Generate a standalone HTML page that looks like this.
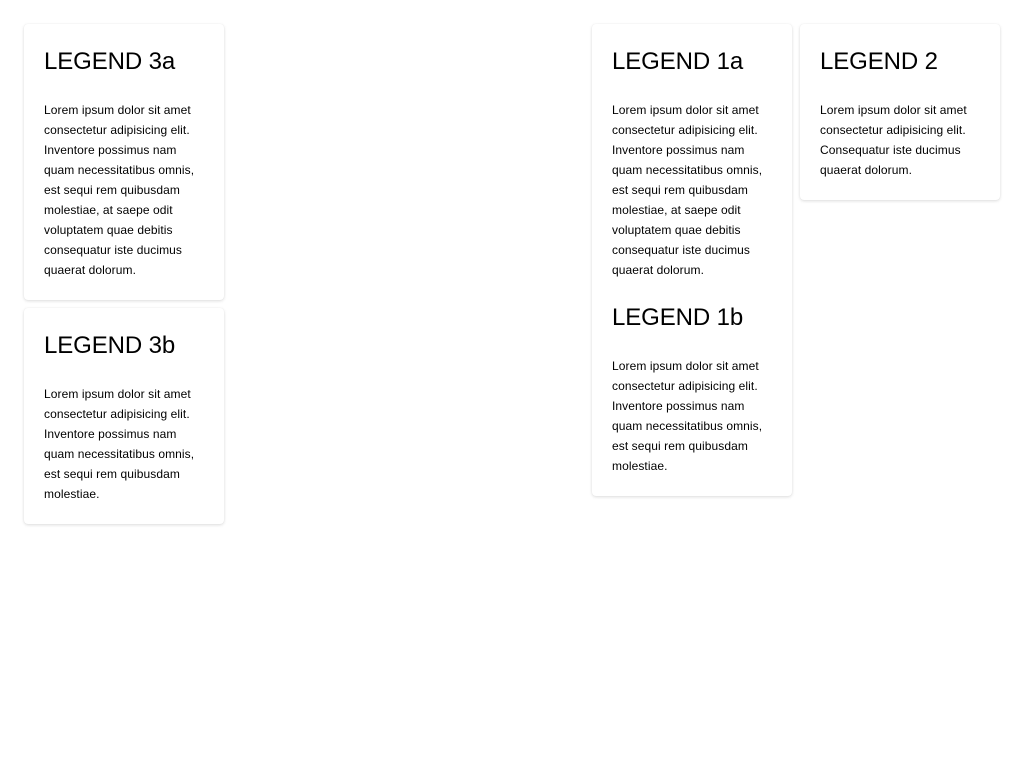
<!DOCTYPE html>
<html><head><style>
body{margin:0;background:#fff;font-family:"Liberation Sans",sans-serif;color:#000}
.card{position:absolute;width:160px;padding:20px;background:#fff;border-radius:4px;box-shadow:0 1px 3px rgba(0,0,0,0.14),0 0 1px rgba(0,0,0,0.06)}
h2{margin:0 0 22px;padding-top:2px;font-size:24px;font-weight:normal;line-height:32px;letter-spacing:-0.1px}
p+h2{margin-top:20px}
p{margin:0;font-size:12px;line-height:20px;letter-spacing:0.08px}
</style></head><body>
<div class="card" style="left:24px;top:24px"><h2>LEGEND 3a</h2><p>Lorem ipsum dolor sit amet consectetur adipisicing elit. Inventore possimus nam quam necessitatibus omnis, est sequi rem quibusdam molestiae, at saepe odit voluptatem quae debitis consequatur iste ducimus quaerat dolorum.</p></div>
<div class="card" style="left:24px;top:308px"><h2>LEGEND 3b</h2><p>Lorem ipsum dolor sit amet consectetur adipisicing elit. Inventore possimus nam quam necessitatibus omnis, est sequi rem quibusdam molestiae.</p></div>
<div class="card" style="left:592px;top:24px"><h2>LEGEND 1a</h2><p>Lorem ipsum dolor sit amet consectetur adipisicing elit. Inventore possimus nam quam necessitatibus omnis, est sequi rem quibusdam molestiae, at saepe odit voluptatem quae debitis consequatur iste ducimus quaerat dolorum.</p><h2>LEGEND 1b</h2><p>Lorem ipsum dolor sit amet consectetur adipisicing elit. Inventore possimus nam quam necessitatibus omnis, est sequi rem quibusdam molestiae.</p></div>
<div class="card" style="left:800px;top:24px"><h2>LEGEND 2</h2><p>Lorem ipsum dolor sit amet consectetur adipisicing elit. Consequatur iste ducimus quaerat dolorum.</p></div>
</body></html>
